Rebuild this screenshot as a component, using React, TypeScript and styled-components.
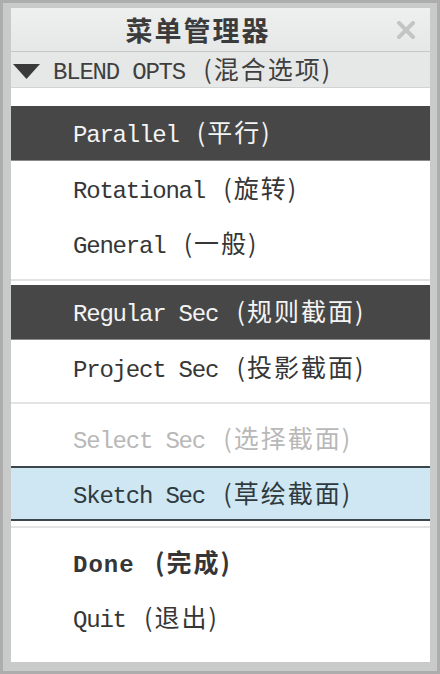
import React from "react";
import styled, { createGlobalStyle, css } from "styled-components";

const GlobalStyle = createGlobalStyle`
  html, body { margin: 0; padding: 0; background: #c8c8c8; overflow: hidden; }
  * { box-sizing: border-box; }
`;

const Frame = styled.div`
  width: 440px;
  height: 674px;
  border: 3px solid #adadad;
  padding: 5px 7px 9px 8px;
  background: #c9caca;
  display: flex;
  flex-direction: column;
`;

const Panel = styled.div`
  flex: 1;
  display: flex;
  flex-direction: column;
  background: #ffffff;
  min-height: 0;
`;

const Header = styled.div`
  height: 44px;
  flex: none;
  display: flex;
  align-items: center;
  gap: 12px;
  padding-right: 15px;
  background: linear-gradient(#eef0f0, #e6e8e8);
  border-bottom: 1px solid #c6c8c8;
`;

const Title = styled.div`
  flex: 1;
  text-align: center;
  font-family: "Noto Sans CJK SC", sans-serif;
  font-weight: 700;
  font-size: 27px;
  line-height: 44px;
  color: #3b3b3b;
  letter-spacing: 2px;
`;

const CloseButton = styled.div`
  width: 18px;
  height: 18px;
  display: flex;
`;

const SectionBar = styled.div`
  height: 36px;
  flex: none;
  display: flex;
  align-items: center;
  gap: 13px;
  padding-left: 2px;
  background: #e6e8e8;
  border-bottom: 1px solid #d2d4d4;
  color: #3f3f3f;
`;

const List = styled.div`
  flex: 1;
  display: flex;
  flex-direction: column;
  background: #ffffff;
`;

const Group = styled.div<{ $pt: number; $pb: number; $grow?: boolean }>`
  padding-top: ${(p) => p.$pt}px;
  padding-bottom: ${(p) => p.$pb}px;
  ${(p) => p.$grow && "flex: 1;"}
`;

const Divider = styled.div`
  height: 2px;
  background: #e2e3e3;
`;

type Variant = "normal" | "selected" | "disabled" | "highlight";

const Row = styled.div<{ $variant: Variant; $bold?: boolean }>`
  height: 55px;
  display: flex;
  align-items: center;
  padding-left: 62px;
  white-space: pre;
  color: #363636;
  ${(p) =>
    p.$variant === "selected" &&
    css`
      background: #474747;
      color: #f4f4f4;
      border-bottom: 1px solid #8a8a8a;
    `}
  ${(p) =>
    p.$variant === "disabled" &&
    css`
      color: #b8b8b8;
    `}
  ${(p) =>
    p.$variant === "highlight" &&
    css`
      background: #cfe7f2;
      color: #2e3a40;
      border-top: 2px solid #3a464c;
      border-bottom: 2px solid #3a464c;
    `}
  font-weight: ${(p) => (p.$bold ? 700 : 400)};
`;

const Label = styled.span`
  display: block;
  line-height: 30px;
  padding-top: 2px;
`;

const Latin = styled.span<{ $bold?: boolean }>`
  font-family: "Liberation Mono", monospace;
  font-size: 24px;
  letter-spacing: ${(p) => (p.$bold ? "1px" : "-1.2px")};
`;

const Cjk = styled.span`
  font-family: "Noto Sans CJK SC", sans-serif;
  font-size: 25px;
  letter-spacing: 2px;
  margin-left: 5px;
`;

const Triangle = () => (
  <svg width="27" height="15" viewBox="0 0 27 15" style={{ marginTop: 4 }}>
    <polygon points="0,0 27,0 13.5,15" fill="#3a3a3a" />
  </svg>
);

const CloseIcon = () => (
  <svg width="18" height="18" viewBox="0 0 18 18">
    <path d="M2 2 L16 16 M16 2 L2 16" stroke="#c3c5c5" strokeWidth="4" strokeLinecap="square" />
  </svg>
);

type Item = { latin: string; cjk: string; variant?: Variant; bold?: boolean };
type GroupData = { pt: number; pb: number; grow?: boolean; items: Item[] };

const groups: GroupData[] = [
  {
    pt: 18,
    pb: 8,
    items: [
      { latin: "Parallel ", cjk: "(平行)", variant: "selected" },
      { latin: "Rotational ", cjk: "(旋转)" },
      { latin: "General ", cjk: "(一般)" },
    ],
  },
  {
    pt: 4,
    pb: 7,
    items: [
      { latin: "Regular Sec ", cjk: "(规则截面)", variant: "selected" },
      { latin: "Project Sec ", cjk: "(投影截面)" },
    ],
  },
  {
    pt: 7,
    pb: 5,
    items: [
      { latin: "Select Sec ", cjk: "(选择截面)", variant: "disabled" },
      { latin: "Sketch Sec ", cjk: "(草绘截面)", variant: "highlight" },
    ],
  },
  {
    pt: 7,
    pb: 15,
    grow: true,
    items: [
      { latin: "Done ", cjk: "(完成)", bold: true },
      { latin: "Quit ", cjk: "(退出)" },
    ],
  },
];

export default function App() {
  return (
    <>
      <GlobalStyle />
      <Frame>
        <Panel>
          <Header>
            <Title>菜单管理器</Title>
            <CloseButton>
              <CloseIcon />
            </CloseButton>
          </Header>
          <SectionBar>
            <Triangle />
            <Label>
              <Latin>BLEND OPTS </Latin>
              <Cjk>(混合选项)</Cjk>
            </Label>
          </SectionBar>
          <List>
            {groups.map((g, gi) => (
              <React.Fragment key={gi}>
                {gi > 0 && <Divider />}
                <Group $pt={g.pt} $pb={g.pb} $grow={g.grow}>
                  {g.items.map((it, ii) => (
                    <Row key={ii} $variant={it.variant ?? "normal"} $bold={it.bold}>
                      <Label>
                        <Latin $bold={it.bold}>{it.latin}</Latin>
                        <Cjk>{it.cjk}</Cjk>
                      </Label>
                    </Row>
                  ))}
                </Group>
              </React.Fragment>
            ))}
          </List>
        </Panel>
      </Frame>
    </>
  );
}
